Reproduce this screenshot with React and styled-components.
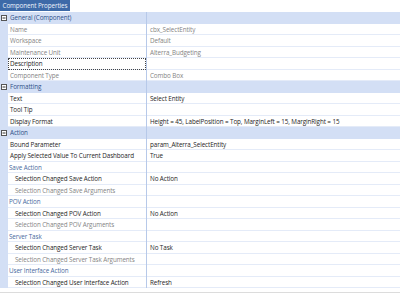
import React from "react";
import styled, { createGlobalStyle } from "styled-components";

const Global = createGlobalStyle`
  html, body { margin: 0; padding: 0; background: #fff; }
  body { font-family: "Open Sans", "Noto Sans", sans-serif; }
`;

const Page = styled.div`
  width: 400px;
  height: 294px;
  display: flex;
  flex-direction: column;
  overflow: hidden;
  background: #fff;
`;

const TabBar = styled.div`
  height: 12px;
  display: flex;
  align-items: flex-start;
`;

const Tab = styled.div`
  height: 11px;
  width: 70px;
  background: #3d6aa8;
  color: #eef3fb;
  font-size: 6.3px;
  letter-spacing: -0.1px;
  line-height: 11px;
  text-align: center;
  box-sizing: border-box;
`;

const Grid = styled.div`
  display: flex;
  flex-direction: column;
`;

const Row = styled.div`
  height: 11.5px;
  display: grid;
  grid-template-columns: 8px 138px 1px 1fr;
  font-size: 6.3px;
  letter-spacing: -0.1px;
  line-height: 11px;
  background: ${(p) => (p.$section ? "#d3dff5" : "#fff")};
`;

const Gutter = styled.div`
  background: #d3dff5;
  display: flex;
  align-items: center;
  justify-content: center;
`;

const NameCell = styled.div`
  box-sizing: border-box;
  padding-left: ${(p) => p.$indent}px;
  border-bottom: 1px solid ${(p) => (p.$section ? "#d3dff5" : "#e4ebf8")};
  color: ${(p) => p.$color};
  white-space: nowrap;
  overflow: hidden;
  ${(p) => (p.$focus ? "outline: 1px dotted #444; outline-offset: -1px;" : "")}
`;

const Divider = styled.div`
  background: #b7c9e9;
`;

const ValueCell = styled.div`
  box-sizing: border-box;
  padding-left: 3px;
  border-bottom: 1px solid ${(p) => (p.$section ? "#d3dff5" : "#e4ebf8")};
  color: ${(p) => p.$color};
  white-space: nowrap;
  overflow: hidden;
`;

const Footer = styled.div`
  margin-top: 4px;
  height: 1px;
  background: #dcdcdc;
`;

const Minus = () => (
  <svg width="6" height="6" viewBox="0 0 6 6">
    <rect x="0.5" y="0.5" width="5" height="5" fill="#fff" stroke="#555" strokeWidth="1" />
    <line x1="1.5" y1="3" x2="4.5" y2="3" stroke="#333" strokeWidth="1" />
  </svg>
);

const DARK = "#262626";
const GRAY = "#858585";
const SEC = "#2f5189";
const SUB = "#4a6aa0";

const rows = [
  { t: "section", name: "General (Component)" },
  { name: "Name", value: "cbx_SelectEntity", ro: true },
  { name: "Workspace", value: "Default", ro: true },
  { name: "Maintenance Unit", value: "Alterra_Budgeting", ro: true },
  { name: "Description", value: "", focus: true },
  { name: "Component Type", value: "Combo Box", ro: true },
  { t: "section", name: "Formatting" },
  { name: "Text", value: "Select Entity" },
  { name: "Tool Tip", value: "" },
  { name: "Display Format", value: "Height = 45, LabelPosition = Top, MarginLeft = 15, MarginRight = 15" },
  { t: "section", name: "Action" },
  { name: "Bound Parameter", value: "param_Alterra_SelectEntity" },
  { name: "Apply Selected Value To Current Dashboard", value: "True" },
  { t: "sub", name: "Save Action" },
  { name: "Selection Changed Save Action", value: "No Action", child: true },
  { name: "Selection Changed Save Arguments", value: "", child: true, ro: true },
  { t: "sub", name: "POV Action" },
  { name: "Selection Changed POV Action", value: "No Action", child: true },
  { name: "Selection Changed POV Arguments", value: "", child: true, ro: true },
  { t: "sub", name: "Server Task" },
  { name: "Selection Changed Server Task", value: "No Task", child: true },
  { name: "Selection Changed Server Task Arguments", value: "", child: true, ro: true },
  { t: "sub", name: "User Interface Action" },
  { name: "Selection Changed User Interface Action", value: "Refresh", child: true },
];

export default function App() {
  return (
    <Page>
      <Global />
      <TabBar>
        <Tab>Component Properties</Tab>
      </TabBar>
      <Grid>
        {rows.map((r, i) => {
          if (r.t === "section") {
            return (
              <Row key={i} $section>
                <Gutter>
                  <Minus />
                </Gutter>
                <NameCell $section $indent={2} $color={SEC}>
                  {r.name}
                </NameCell>
                <Divider />
                <ValueCell $section />
              </Row>
            );
          }
          if (r.t === "sub") {
            return (
              <Row key={i}>
                <Gutter />
                <NameCell $indent={1} $color={SUB}>
                  {r.name}
                </NameCell>
                <Divider />
                <ValueCell />
              </Row>
            );
          }
          const c = r.ro ? GRAY : DARK;
          return (
            <Row key={i}>
              <Gutter />
              <NameCell $indent={r.child ? 7 : 2} $color={c} $focus={r.focus}>
                {r.name}
              </NameCell>
              <Divider />
              <ValueCell $color={c}>{r.value}</ValueCell>
            </Row>
          );
        })}
      </Grid>
      <Footer />
    </Page>
  );
}
